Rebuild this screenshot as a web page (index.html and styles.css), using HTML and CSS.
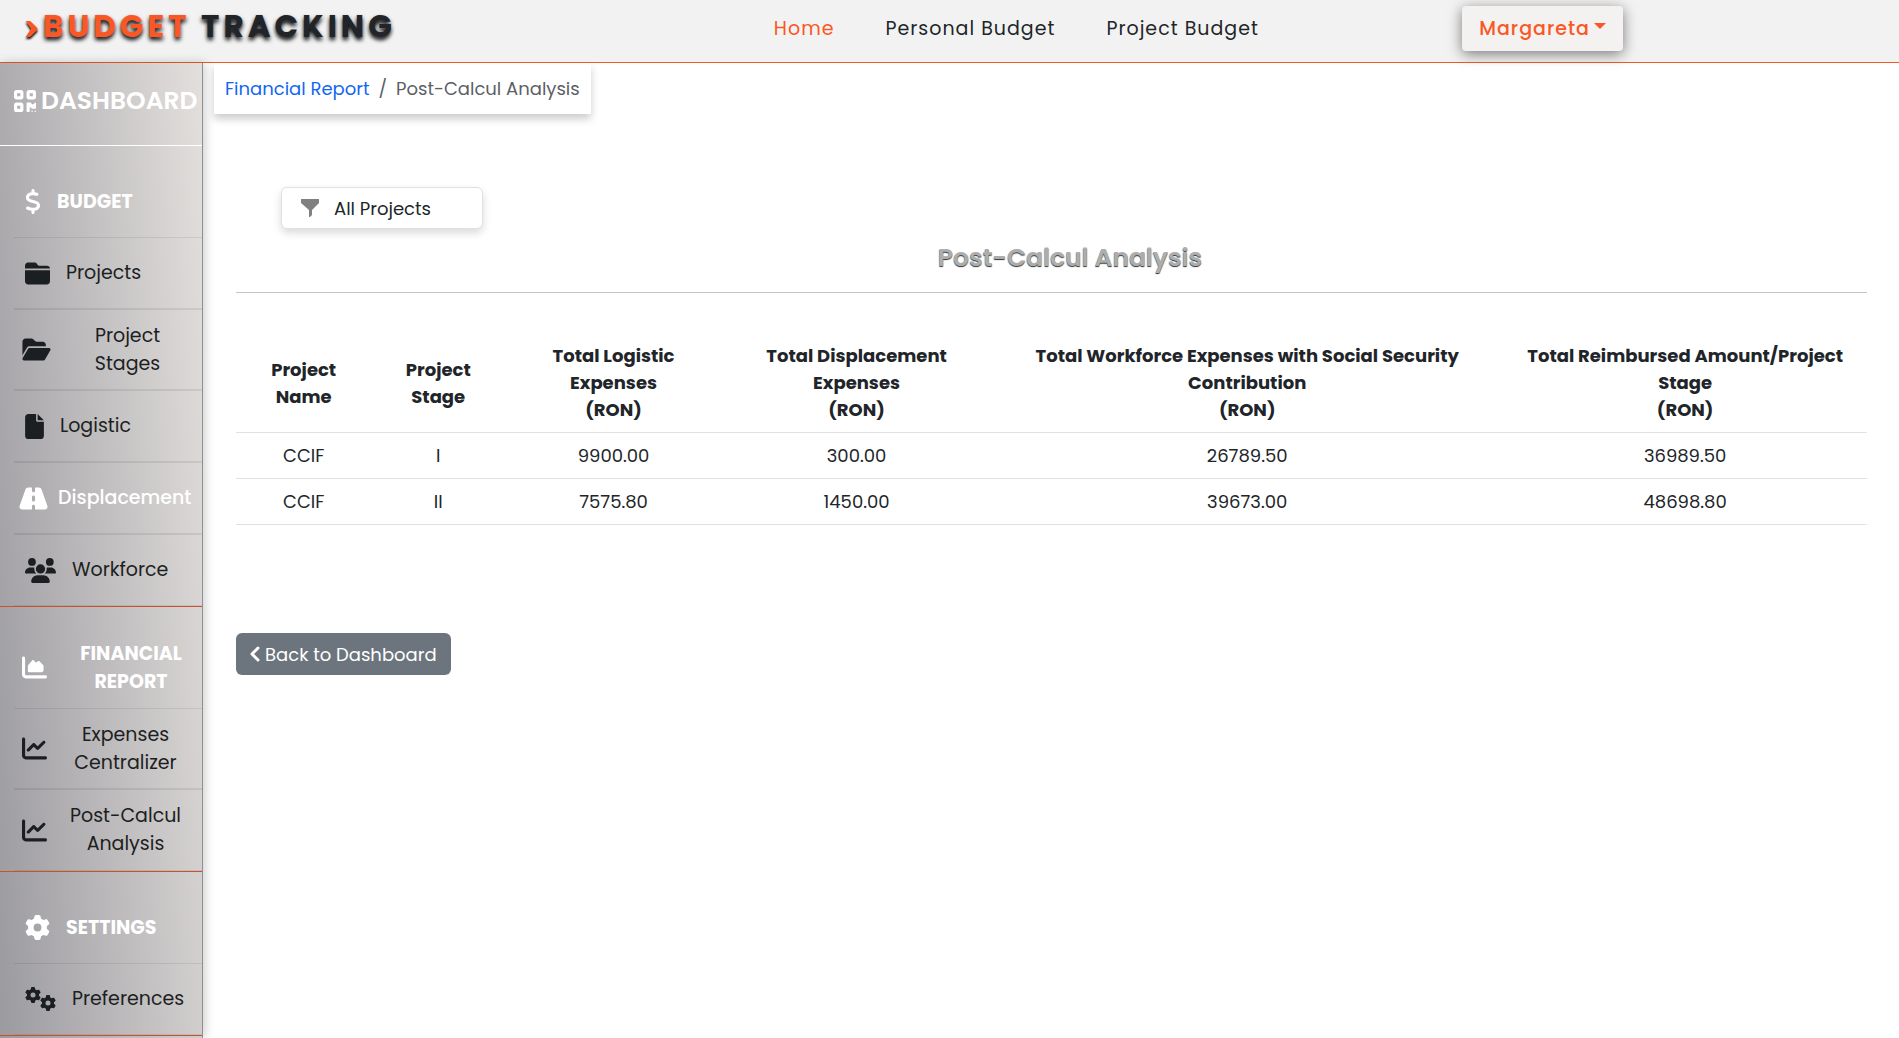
FILE: index.html
```html
<!DOCTYPE html>
<html lang="en">
<head>
<meta charset="utf-8">
<meta name="viewport" content="width=device-width, initial-scale=1">
<title>Budget Tracking - Post-Calcul Analysis</title>
<link rel="stylesheet" href="styles.css">
</head>
<body>
<svg class="sprite" aria-hidden="true">
  <symbol id="gear" viewBox="0 0 512 512"><path d="M495.900 166.600c3.200 8.700 .5 18.400-6.400 24.600l-43.300 39.400c1.100 8.300 1.700 16.800 1.700 25.400s-.6 17.100-1.700 25.400l43.300 39.400c6.900 6.200 9.600 15.900 6.400 24.600c-4.400 11.900-9.700 23.300-15.800 34.300l-4.700 8.100c-6.600 11-14 21.400-22.100 31.200c-5.900 7.200-15.700 9.600-24.500 6.800l-55.700-17.700c-13.400 10.300-28.200 18.900-44 25.400l-12.500 57.100c-2 9.100-9 16.300-18.200 17.800c-13.800 2.300-28 3.500-42.500 3.500s-28.700-1.200-42.500-3.500c-9.200-1.500-16.200-8.700-18.200-17.800l-12.500-57.100c-15.800-6.500-30.600-15.100-44-25.400L83.100 425.900c-8.800 2.800-18.600 .3-24.500-6.800c-8.100-9.800-15.500-20.200-22.100-31.200l-4.700-8.100c-6.100-11-11.400-22.400-15.800-34.300c-3.200-8.700-.5-18.400 6.400-24.600l43.300-39.400C64.600 273.100 64 264.600 64 256s.6-17.100 1.700-25.400L22.400 191.200c-6.900-6.200-9.600-15.900-6.400-24.600c4.400-11.900 9.700-23.300 15.800-34.300l4.700-8.100c6.600-11 14-21.400 22.100-31.200c5.900-7.200 15.700-9.600 24.500-6.800l55.700 17.700c13.400-10.300 28.200-18.900 44-25.400l12.500-57.100c2-9.100 9-16.300 18.200-17.800C227.300 1.200 241.500 0 256 0s28.700 1.200 42.500 3.500c9.200 1.500 16.200 8.700 18.200 17.800l12.500 57.100c15.800 6.500 30.600 15.100 44 25.400l55.700-17.700c8.800-2.800 18.600-.3 24.500 6.800c8.100 9.800 15.500 20.200 22.100 31.200l4.700 8.100c6.100 11 11.400 22.400 15.800 34.300zM256 336a80 80 0 1 0 0-160 80 80 0 1 0 0 160z"/></symbol>
  <symbol id="chart-line" viewBox="0 0 512 512"><path d="M64 64c0-17.700-14.300-32-32-32S0 46.300 0 64V400c0 44.200 35.800 80 80 80H480c17.700 0 32-14.300 32-32s-14.300-32-32-32H80c-8.800 0-16-7.200-16-16V64zm406.600 86.600c12.500-12.500 12.500-32.800 0-45.300s-32.800-12.500-45.300 0L320 210.700l-57.400-57.400c-12.500-12.500-32.800-12.500-45.300 0l-112 112c-12.500 12.500-12.500 32.800 0 45.300s32.800 12.500 45.300 0L240 221.300l57.400 57.400c12.500 12.500 32.800 12.500 45.300 0l128-128z"/></symbol>
</svg>

<header class="topbar">
  <a class="brand" href="#"><svg class="brand-mark" viewBox="0 0 13 18" aria-hidden="true"><path d="M0 0h5l8 8v2l-8 8H0l6-9z"/></svg><span class="brand-accent">BUDGET</span> TRACKING</a>
  <nav class="topnav">
    <a class="active" href="#">Home</a>
    <a href="#">Personal Budget</a>
    <a href="#">Project Budget</a>
  </nav>
  <div><button class="user-menu" type="button">Margareta<span class="caret"></span></button></div>
</header>

<div class="layout">
  <aside class="sidebar">
    <h2 class="side-title">
      <svg width="22" height="26" viewBox="0 0 448 512" aria-hidden="true"><path d="M0 80C0 53.500 21.500 32 48 32h96c26.500 0 48 21.500 48 48v96c0 26.500-21.500 48-48 48H48c-26.500 0-48-21.500-48-48V80zM64 96v64h64V96H64zM0 336c0-26.500 21.500-48 48-48h96c26.500 0 48 21.500 48 48v96c0 26.500-21.500 48-48 48H48c-26.500 0-48-21.500-48-48V336zm64 16v64h64V352H64zM304 32h96c26.500 0 48 21.500 48 48v96c0 26.500-21.500 48-48 48H304c-26.500 0-48-21.500-48-48V80c0-26.500 21.500-48 48-48zm80 64H320v64h64V96zM256 304c0-8.800 7.200-16 16-16h64c8.800 0 16 7.200 16 16s7.200 16 16 16h32c8.800 0 16-7.200 16-16s7.200-16 16-16s16 7.200 16 16v96c0 8.800-7.200 16-16 16H368c-8.800 0-16-7.200-16-16s-7.200-16-16-16s-16 7.200-16 16v64c0 8.800-7.200 16-16 16H272c-8.800 0-16-7.200-16-16V304zM368 480a16 16 0 1 1 0-32 16 16 0 1 1 0 32zm64 0a16 16 0 1 1 0-32 16 16 0 1 1 0 32z"/></svg>
      DASHBOARD
    </h2>
    <section class="group">
      <h3 class="item heading">
        <svg width="16" height="25" viewBox="0 0 320 512" aria-hidden="true"><path d="M160 0c17.700 0 32 14.300 32 32V67.700c1.600 .2 3.100 .4 4.700 .7c.4 .1 .7 .1 1.100 .2l48 8.800c17.400 3.200 28.900 19.900 25.700 37.200s-19.900 28.900-37.200 25.700l-47.500-8.700c-31.300-4.600-58.900-1.500-78.300 6.200s-27.200 18.300-29 28.100c-2 10.700-.5 16.700 1.200 20.400c1.800 3.900 5.500 8.300 12.800 13.200c16.300 10.700 41.300 17.700 73.700 26.300l2.900 .8c28.600 7.600 63.600 16.800 89.600 33.800c14.200 9.300 27.600 21.900 35.900 39.500c8.500 17.900 10.300 37.900 6.400 59.200c-6.900 38-33.100 63.400-65.600 76.700c-13.700 5.600-28.600 9.200-44.400 11V480c0 17.700-14.300 32-32 32s-32-14.300-32-32V445.100c-.4-.1-.9-.1-1.300-.2l-.2 0 0 0c-24.400-3.800-64.500-14.300-91.500-26.300c-16.100-7.200-23.400-26.100-16.200-42.200s26.100-23.400 42.200-16.200c20.900 9.300 55.300 18.500 75.200 21.600c31.900 4.700 58.200 2 76-5.300c16.900-6.900 24.600-16.900 26.800-28.900c1.900-10.600 .4-16.700-1.300-20.400c-1.900-4-5.600-8.400-13-13.300c-16.400-10.700-41.500-17.700-74-26.300l-2.800-.7 0 0C119.400 279.300 84.400 270 58.400 253c-14.200-9.300-27.500-22-35.800-39.600c-8.400-17.900-10.100-37.900-6.100-59.200C23.700 116 52.300 91.200 84.800 78.300c13.300-5.300 27.900-8.900 43.200-11V32c0-17.700 14.300-32 32-32z"/></svg>
        <span>BUDGET</span>
      </h3>
      <a class="item" href="#">
        <svg width="25" height="25" viewBox="0 0 512 512" aria-hidden="true"><path d="M448 480H64c-35 0-64-29-64-64V188h512v228c0 35-29 64-64 64zM512 156H0V96c0-35 29-64 64-64h128c20 0 39 9 51 26l19 25c6 8 16 13 26 13h160c35 0 64 25 64 60z"/></svg>
        <span>Projects</span>
      </a>
      <a class="item wide" href="#">
        <svg width="29" height="25" viewBox="0 0 576 512" aria-hidden="true"><path d="M88.700 223.800L0 375.800V96C0 60.700 28.700 32 64 32H181.500c17 0 33.300 6.700 45.300 18.700l26.500 26.500c12 12 28.300 18.700 45.300 18.700H416c35.300 0 64 28.700 64 64v32H144c-22.800 0-43.800 12.100-55.300 31.800zm27.600 16.100C122.100 230 132.600 224 144 224H544c11.500 0 22 6.100 27.700 16.100s5.700 22.200-.1 32.100l-112 192C453.900 474 443.400 480 432 480H32c-11.500 0-22-6.100-27.700-16.100s-5.700-22.200 .1-32.100l112-192z"/></svg>
        <span>Project<br>Stages</span>
      </a>
      <a class="item" href="#">
        <svg width="19" height="25" viewBox="0 0 384 512" aria-hidden="true"><path d="M0 64C0 28.700 28.700 0 64 0H224V128c0 17.700 14.300 32 32 32H384V448c0 35.300-28.700 64-64 64H64c-35.300 0-64-28.700-64-64V64zm384 64H256V0L384 128z"/></svg>
        <span>Logistic</span>
      </a>
      <a class="item hovered" href="#">
        <svg width="29" height="25" viewBox="0 0 576 512" aria-hidden="true"><path d="M256 32H181.200c-27.100 0-51.300 17.100-60.300 42.600L3.100 407.200C1.100 413 0 419.200 0 425.400C0 455.500 24.500 480 54.600 480H256V416c0-17.700 14.300-32 32-32s32 14.300 32 32v64H521.400c30.200 0 54.600-24.500 54.600-54.600c0-6.200-1.100-12.400-3.100-18.200L455.100 74.600C446 49.100 421.900 32 394.800 32H320V96c0 17.700-14.300 32-32 32s-32-14.300-32-32V32zm64 192v64c0 17.700-14.300 32-32 32s-32-14.300-32-32V224c0-17.700 14.300-32 32-32s32 14.300 32 32z"/></svg>
        <span>Displacement</span>
      </a>
      <a class="item" href="#">
        <svg width="31" height="25" viewBox="0 0 640 512" aria-hidden="true"><path d="M144 0a80 80 0 1 1 0 160A80 80 0 1 1 144 0zM512 0a80 80 0 1 1 0 160A80 80 0 1 1 512 0zM0 298.700C0 239.800 47.800 192 106.700 192h42.700c15.900 0 31 3.500 44.600 9.700c-1.300 7.200-1.900 14.700-1.900 22.300c0 38.200 16.800 72.500 43.300 96H21.300C9.600 320 0 310.400 0 298.700zM405.300 320c26.600-23.500 43.300-57.800 43.300-96c0-7.600-.7-15-1.900-22.300c13.600-6.300 28.700-9.700 44.600-9.700h42.700C592.200 192 640 239.800 640 298.700c0 11.800-9.600 21.300-21.300 21.300H405.300zM224 224a96 96 0 1 1 192 0 96 96 0 1 1-192 0zM128 485.300C128 411.700 187.700 352 261.300 352H378.700C452.300 352 512 411.700 512 485.300c0 14.700-11.900 26.700-26.700 26.700H154.700c-14.700 0-26.700-11.900-26.700-26.700z"/></svg>
        <span>Workforce</span>
      </a>
    </section>
    <section class="group">
      <h3 class="item heading wide">
        <svg width="25" height="25" viewBox="0 0 512 512" aria-hidden="true"><path d="M64 64c0-17.700-14.300-32-32-32S0 46.300 0 64V400c0 44.200 35.800 80 80 80H480c17.700 0 32-14.300 32-32s-14.300-32-32-32H80c-8.800 0-16-7.200-16-16V64zM144 352c-14 0-24-8-24-20V224c0-8 3-15 8-20l80-92c10-11 26-11 36 0l32 36c6 7 16 7 22 2l26-22c10-9 24-8 33 1l76 74c5 6 8 13 8 20v90c0 22-15 39-36 39z"/></svg>
        <span>FINANCIAL<br>REPORT</span>
      </h3>
      <a class="item wide" href="#">
        <svg width="25" height="25" aria-hidden="true"><use href="#chart-line"/></svg>
        <span>Expenses<br>Centralizer</span>
      </a>
      <a class="item wide" href="#">
        <svg width="25" height="25" aria-hidden="true"><use href="#chart-line"/></svg>
        <span>Post-Calcul<br>Analysis</span>
      </a>
    </section>
    <section class="group">
      <h3 class="item heading">
        <svg width="25" height="25" aria-hidden="true"><use href="#gear"/></svg>
        <span>SETTINGS</span>
      </h3>
      <a class="item" href="#">
        <svg width="31" height="25" viewBox="0 0 31 25" aria-hidden="true"><use href="#gear" width="16" height="16"/><use href="#gear" x="15" y="8" width="16" height="16"/></svg>
        <span>Preferences</span>
      </a>
    </section>
  </aside>

  <main class="content">
    <nav class="breadcrumb" aria-label="breadcrumb">
      <a href="#">Financial Report</a><span class="sep">/</span><span>Post-Calcul Analysis</span>
    </nav>
    <div class="report">
      <div class="filter">
        <select class="filter-select" aria-label="Project filter"><option>All Projects</option></select>
        <svg class="filter-icon" width="18" height="18" viewBox="0 0 18 18" aria-hidden="true"><path d="M0 0h18v4l-7 7v5l-2 2H8v-7L0 4z"/></svg>
      </div>
      <h1 class="title">Post-Calcul Analysis</h1>
      <table class="table">
        <colgroup><col class="c-name"><col class="c-stage"><col class="c-log"><col class="c-disp"><col class="c-work"><col class="c-total"></colgroup>
        <thead>
          <tr>
            <th>Project<br>Name</th>
            <th>Project<br>Stage</th>
            <th>Total Logistic<br>Expenses<br>(RON)</th>
            <th>Total Displacement<br>Expenses<br>(RON)</th>
            <th>Total Workforce Expenses with Social Security<br>Contribution<br>(RON)</th>
            <th>Total Reimbursed Amount/Project<br>Stage<br>(RON)</th>
          </tr>
        </thead>
        <tbody>
          <tr><td>CCIF</td><td>I</td><td>9900.00</td><td>300.00</td><td>26789.50</td><td>36989.50</td></tr>
          <tr><td>CCIF</td><td>II</td><td>7575.80</td><td>1450.00</td><td>39673.00</td><td>48698.80</td></tr>
        </tbody>
      </table>
      <a class="back" href="#"><svg width="10" height="16" viewBox="0 0 10 16" aria-hidden="true"><path d="M8 2L2 8l6 6"/></svg>Back to Dashboard</a>
    </div>
  </main>
</div>
</body>
</html>
```
FILE: styles.css
```css
* {
  box-sizing: border-box;
}

body {
  margin: 0;
  min-height: 100vh;
  display: flex;
  flex-direction: column;
  background: #fff;
  color: #212529;
  font: 400 18px/27px Poppins, Inter, "Liberation Sans", sans-serif;
}

a {
  color: inherit;
  text-decoration: none;
}

svg {
  flex: none;
  fill: currentColor;
}

.sprite {
  position: absolute;
  width: 0;
  height: 0;
}

/* Top bar */
.topbar {
  display: grid;
  grid-template-columns: 40.75% 36.25% 1fr;
  align-items: center;
  height: 63px;
  padding-bottom: 6px;
  background: #f2f2f2;
  border-bottom: 1px solid #f15a24;
}

.brand {
  padding: 0 0 4px 25px;
  font-size: 31px;
  font-weight: 700;
  line-height: 36px;
  letter-spacing: 4px;
  white-space: nowrap;
  text-shadow: 0 3px 4px #000;
}

.brand-mark {
  width: 13px;
  height: 16px;
  margin-right: 5px;
  fill: #f95726;
  filter: drop-shadow(0 2px 1px #000);
}

.brand-accent {
  color: #f95726;
}

.topnav {
  display: flex;
  gap: 51px;
  font-size: 19px;
  letter-spacing: 1px;
  white-space: nowrap;
}

.active {
  color: #f95726;
}

.user-menu {
  display: flex;
  align-items: center;
  gap: 4px;
  height: 45px;
  padding: 0 17px;
  border: 0;
  border-radius: 4px;
  background: #f4f2f0;
  color: #f95726;
  font: inherit;
  font-size: 19px;
  font-weight: 500;
  letter-spacing: 1px;
  box-shadow: 0 3px 14px rgba(0, 0, 0, .5);
}

.caret {
  margin-bottom: 4px;
  border: 6px solid transparent;
  border-top-color: currentColor;
  border-bottom: 0;
}

/* Sidebar */
.layout {
  display: flex;
  flex: 1;
}

.sidebar {
  flex: none;
  width: 203px;
  border-right: 1px solid #909090;
  background: linear-gradient(86deg, #9b9a9f, #e3dfdd);
  box-shadow: 2px 0 10px rgba(0, 0, 0, .2);
}

.side-title {
  display: flex;
  align-items: center;
  gap: 5px;
  height: 83px;
  margin: 0;
  padding: 0 0 7px 14px;
  border-bottom: 1px solid #fff;
  color: #fff;
  font-size: 25px;
  font-weight: 600;
}

.group {
  padding: 20px 0 0 14px;
  border-bottom: 1px solid #c8522c;
}

.item {
  display: flex;
  align-items: center;
  gap: 16px;
  min-height: 72px;
  margin: 0;
  padding: 6px 0 6px 11px;
  border-bottom: 2px solid rgba(0, 0, 0, .08);
  color: #1c1f21;
  font-size: 19px;
  font-weight: 400;
  line-height: 28px;
}

.item:last-child {
  min-height: 71px;
  border-bottom-width: 1px;
}

.wide,
.wide:last-child {
  gap: 2px;
  min-height: 81px;
  padding-left: 8px;
}

.wide span {
  flex: 1;
  text-align: center;
}

.heading {
  color: #fff;
  font-weight: 700;
  border-bottom-width: 1px;
}

.heading.wide {
  gap: 13px;
  min-height: 82px;
}

.hovered {
  gap: 10px;
  padding-left: 5px;
  color: #fff;
  font-weight: 500;
}

/* Main content */
.content {
  flex: 1;
  min-width: 0;
  padding: 0 32px 32px 11px;
}

.breadcrumb {
  width: fit-content;
  padding: 12px 11px;
  background: #fff;
  box-shadow: 0 5px 8px rgba(0, 0, 0, .2);
  color: #5c6065;
}

.breadcrumb a {
  color: #1266f1;
}

.sep {
  padding: 0 9px;
}

.report {
  padding: 73px 0 0 22px;
}

.filter {
  position: relative;
  width: 202px;
  margin-left: 45px;
}

.filter-select {
  display: block;
  width: 100%;
  height: 42px;
  padding: 0 16px 0 52px;
  appearance: none;
  border: 1px solid #dee2e6;
  border-radius: 6px;
  background: #fff;
  color: #212529;
  font: inherit;
  box-shadow: 0 4px 8px rgba(0, 0, 0, .15);
}

.filter-icon {
  position: absolute;
  left: 20px;
  top: 12px;
  fill: #808080;
  pointer-events: none;
}

.title {
  margin: 0;
  padding: 13px 0 19px 37px;
  border-bottom: 1px solid #c4c4c4;
  color: #adadad;
  font-size: 25px;
  font-weight: 600;
  line-height: 31px;
  text-align: center;
  text-shadow: 0 1px 1px #333;
}

.table {
  width: 100%;
  margin-top: 39px;
  border-collapse: collapse;
  table-layout: fixed;
  text-align: center;
}

.c-name { width: 8.3%; }
.c-stage { width: 8.2%; }
.c-log { width: 13.3%; }
.c-disp { width: 16.5%; }
.c-work { width: 31.4%; }
.c-total { width: 22.3%; }

.table th {
  padding: 10px 4px 9px;
  border-bottom: 1px solid #dee2e6;
  font-weight: 700;
}

.table td {
  padding: 9px;
  border-bottom: 1px solid #dee2e6;
}

.back {
  display: inline-flex;
  align-items: center;
  gap: 5px;
  height: 42px;
  margin-top: 108px;
  padding: 0 14px;
  border-radius: 6px;
  background: #6c757d;
  color: #fff;
}

.back svg {
  fill: none;
  stroke: currentColor;
  stroke-width: 3;
  stroke-linecap: round;
  stroke-linejoin: round;
}
```
